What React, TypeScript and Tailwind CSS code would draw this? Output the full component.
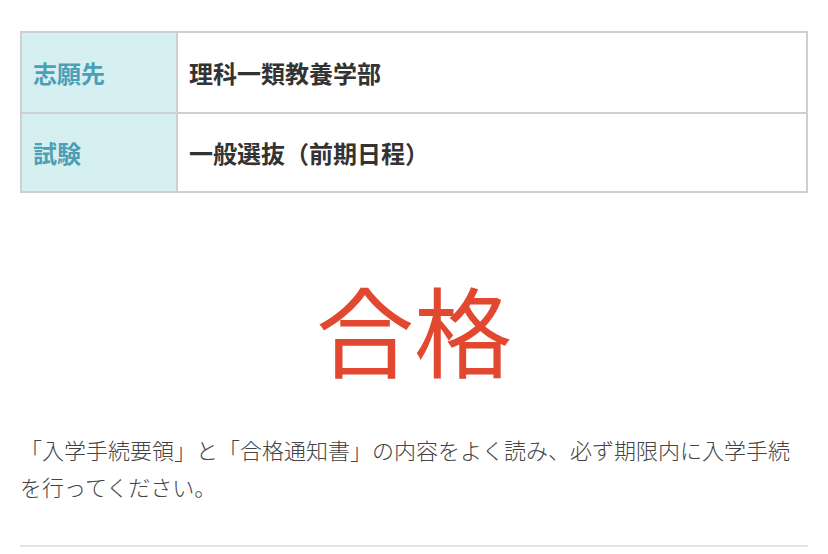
export default function App() {
  const rows = [
    { label: '志願先', value: '理科一類教養学部' },
    { label: '試験', value: '一般選抜（前期日程）' },
  ];

  return (
    <div
      className="w-[828px] h-[554px] bg-white overflow-hidden"
      style={{ fontFamily: '"Noto Sans CJK JP", "Noto Sans", sans-serif' }}
    >
      <div className="mx-[20px] w-[788px] pt-[31px]">
        <div className="border-2 border-[#cfcfcf]">
          {rows.map((r, i) => (
            <div
              key={r.label}
              className={`grid grid-cols-[156px_1fr] h-[79px] ${i > 0 ? 'border-t-2 border-[#cfcfcf]' : ''}`}
            >
              <div className="bg-[#d6f0f1] border-r-2 border-[#cfcfcf] flex items-center pl-[11px] text-[24px] font-bold text-[#4d9fb6]">
                {r.label}
              </div>
              <div className="flex items-center pl-[11px] text-[24px] font-bold text-[#333333]">
                {r.value}
              </div>
            </div>
          ))}
        </div>

        <div className="mt-[78px] flex justify-center text-[98px] leading-[112px] text-[#e1482f]">
          合格
        </div>

        <p className="mt-[48px] text-[22px] leading-[37px] font-light text-[#444444]">
          「入学手続要領」と「合格通知書」の内容をよく読み、必ず期限内に入学手続を行ってください。
        </p>

        <div className="mt-[40px] h-[2px] bg-[#e3e3e3]" />
      </div>
    </div>
  );
}
